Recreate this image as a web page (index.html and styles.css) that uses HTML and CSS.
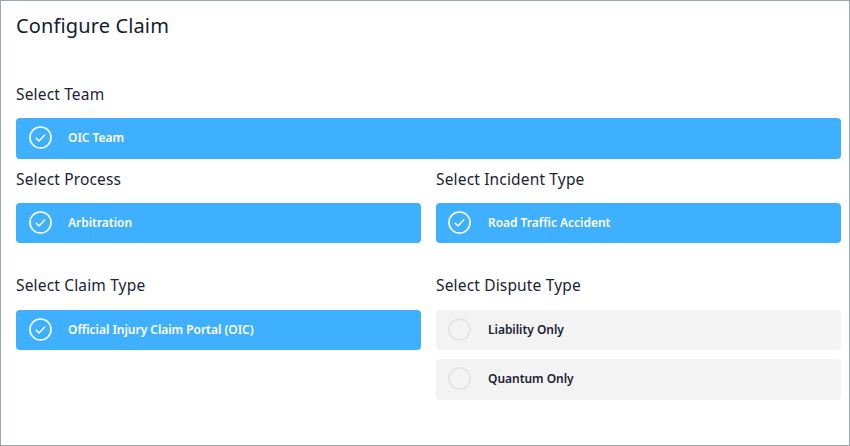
FILE: index.html
```html
<!DOCTYPE html>
<html lang="en">
<head>
<meta charset="utf-8">
<title>Configure Claim</title>
<link rel="stylesheet" href="styles.css">
</head>
<body>
<main class="panel">
  <h1 class="title">Configure Claim</h1>
  <section class="team">
    <h2 class="label">Select Team</h2>
    <div class="option selected">
      <svg class="mark" viewBox="0 0 24 24"><circle cx="12" cy="12" r="11"/><path d="M7.2 12.4l3.3 3.2 6.3-6.7"/></svg>
      <span>OIC Team</span>
    </div>
  </section>
  <div class="columns">
    <section class="group process">
      <h2 class="label">Select Process</h2>
      <div class="option selected">
        <svg class="mark" viewBox="0 0 24 24"><circle cx="12" cy="12" r="11"/><path d="M7.2 12.4l3.3 3.2 6.3-6.7"/></svg>
        <span>Arbitration</span>
      </div>
    </section>
    <section class="group process right">
      <h2 class="label">Select Incident Type</h2>
      <div class="option selected">
        <svg class="mark" viewBox="0 0 24 24"><circle cx="12" cy="12" r="11"/><path d="M7.2 12.4l3.3 3.2 6.3-6.7"/></svg>
        <span>Road Traffic Accident</span>
      </div>
    </section>
    <section class="group lower">
      <h2 class="label">Select Claim Type</h2>
      <div class="option selected">
        <svg class="mark" viewBox="0 0 24 24"><circle cx="12" cy="12" r="11"/><path d="M7.2 12.4l3.3 3.2 6.3-6.7"/></svg>
        <span>Official Injury Claim Portal (OIC)</span>
      </div>
    </section>
    <section class="group lower right">
      <h2 class="label">Select Dispute Type</h2>
      <div class="option">
        <svg class="mark" viewBox="0 0 24 24"><circle cx="12" cy="12" r="11"/></svg>
        <span>Liability Only</span>
      </div>
      <div class="option tall">
        <svg class="mark" viewBox="0 0 24 24"><circle cx="12" cy="12" r="11"/></svg>
        <span>Quantum Only</span>
      </div>
    </section>
  </div>
</main>
</body>
</html>
```
FILE: styles.css
```css
* { box-sizing: border-box; }
html, body { margin: 0; height: 100%; background: #fff; }
body { font-family: "Noto Sans", Roboto, sans-serif; color: #1a2233; }
.panel { width: 850px; height: 446px; border: 1px solid #9aa7ae; padding: 0 8px 0 15px; overflow: hidden; }
.title { margin: 0; padding-top: 11px; font-size: 20px; line-height: 28px; font-weight: 400; letter-spacing: 0.13px; color: #131c30; }
.team { padding-top: 43px; }
.label { margin: 0; font-size: 15.5px; line-height: 22px; font-weight: 400; letter-spacing: 0.16px; color: #1c2434; }
.team .label { margin-bottom: 13px; }
.option { display: flex; align-items: center; height: 40px; padding: 0 0 1px 13px; border-radius: 4px; background: #f3f3f3; font-size: 12px; font-weight: 600; letter-spacing: -0.03px; color: #1a2233; }
.option span { margin-left: 16px; }
.right .option { padding-left: 12px; }
.right .option span { margin-left: 17px; }
.team .option { height: 41px; padding-bottom: 2px; }
.option.selected { background: #3fb0ff; color: #fff; }
.option.tall { height: 41px; margin-top: 9px; padding-bottom: 2px; }
.mark { width: 23px; height: 23px; flex: none; fill: none; stroke: #e2e2e2; stroke-width: 1.7; }
.selected .mark { stroke: #fff; }
.mark path { stroke-width: 1.5; }
.columns { display: grid; grid-template-columns: 405px 405px; column-gap: 15px; padding-top: 9px; }
.group .label { margin-bottom: 13px; }
.lower .label { margin-bottom: 14px; }
.process { padding-bottom: 31px; }
```
